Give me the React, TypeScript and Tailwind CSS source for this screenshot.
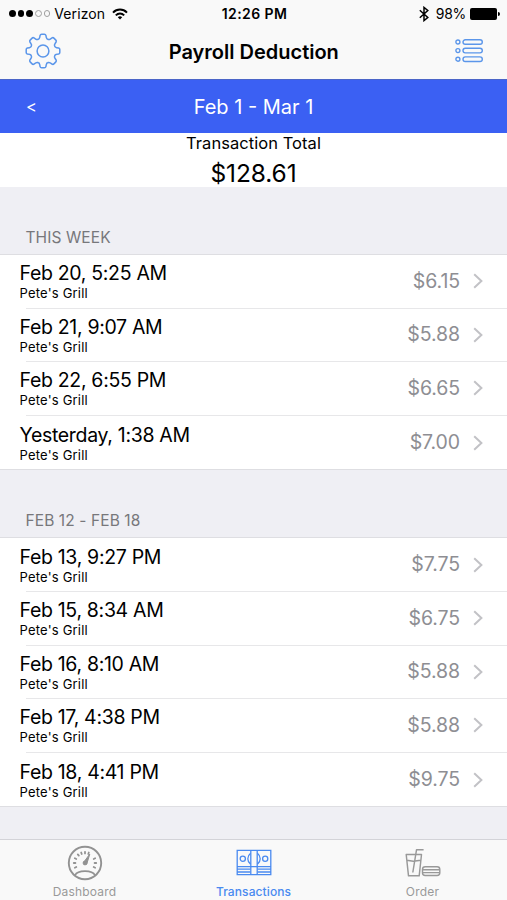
import React from 'react';
import clsx from 'clsx';

const sections = [
  {
    title: 'THIS WEEK',
    items: [
      { date: 'Feb 20, 5:25 AM', amount: '$6.15' },
      { date: 'Feb 21, 9:07 AM', amount: '$5.88' },
      { date: 'Feb 22, 6:55 PM', amount: '$6.65' },
      { date: 'Yesterday, 1:38 AM', amount: '$7.00' },
    ],
  },
  {
    title: 'FEB 12 - FEB 18',
    items: [
      { date: 'Feb 13, 9:27 PM', amount: '$7.75' },
      { date: 'Feb 15, 8:34 AM', amount: '$6.75' },
      { date: 'Feb 16, 8:10 AM', amount: '$5.88' },
      { date: 'Feb 17, 4:38 PM', amount: '$5.88' },
      { date: 'Feb 18, 4:41 PM', amount: '$9.75' },
    ],
  },
];

// Eight teeth, each the same curve turned by 45 degrees
const gearPath = () => {
  let d = '';
  for (let i = 0; i < 8; i++) {
    const a = (i * Math.PI) / 4;
    const p = (x: number, y: number) =>
      `${(x * Math.cos(a) - y * Math.sin(a)).toFixed(2)} ${(x * Math.sin(a) + y * Math.cos(a)).toFixed(2)}`;
    d += `${i === 0 ? 'M' : 'L'}${p(-5.1, -11.6)}Q${p(-3.6, -11.9)} ${p(-3.3, -13.6)}L${p(-2.9, -15.6)}Q${p(-2.6, -16.8)} ${p(-1.4, -16.8)}L${p(1.4, -16.8)}Q${p(2.6, -16.8)} ${p(2.9, -15.6)}L${p(3.3, -13.6)}Q${p(3.6, -11.9)} ${p(5.1, -11.6)}`;
  }
  return d + 'Z';
};

const GearIcon = () => (
  <svg width="36" height="36" viewBox="-18 -18 36 36" fill="none" stroke="#5b96ea" strokeWidth="1.5" strokeLinejoin="round">
    <path d={gearPath()} />
    <circle r="5.9" />
  </svg>
);

const ListIcon = () => (
  <svg width="28" height="24" viewBox="0 0 28 24" fill="none" stroke="#5b96ea" strokeWidth="1.4">
    {[3, 11.6, 20.2].map((y) => (
      <g key={y}>
        <circle cx="2.9" cy={y} r="2" />
        <rect x="8" y={y - 2.3} width="19.3" height="4.6" rx="2.3" />
      </g>
    ))}
  </svg>
);

const WifiIcon = () => (
  <svg width="16" height="12" viewBox="0 0 16 12" fill="none" stroke="#000" strokeWidth="2">
    <path d="M1 4.6C5 .6 11 .6 15 4.6" />
    <path d="M3.8 7.4C6.2 5 9.8 5 12.2 7.4" />
    <path d="M8 11.5 5.8 9.2Q8 7.4 10.2 9.2Z" fill="#000" stroke="none" />
  </svg>
);

const BluetoothIcon = () => (
  <svg width="10" height="16" viewBox="0 0 10 16" fill="none" stroke="#000" strokeWidth="1.5">
    <path d="M.8 4.3 8.8 11.5 5 14.6V1.4L8.8 4.5.8 11.7" />
  </svg>
);

const DashboardIcon = () => (
  <svg width="36" height="36" viewBox="-18 -18 36 36" fill="none" stroke="#929292">
    <circle r="16.2" strokeWidth="1.9" />
    {[-115, -90, -65, -40, -20, 0, 20, 65, 90, 115].map((a) => (
      <path key={a} d="M0-11.2V-9.6" strokeWidth="1.8" strokeLinecap="round" transform={`rotate(${a})`} />
    ))}
    <path d="M-1.4-.6 4.8-9 1.7 1.2Z" fill="#929292" />
    <circle r="1.9" fill="#929292" />
    <path d="M-10 12.3Q-8 8.2 0 8.2T10 12.3" strokeWidth="1.7" />
  </svg>
);

const MoneyIcon = () => (
  <svg width="36" height="28" viewBox="0 0 36 28" fill="none" stroke="#4a8af0" strokeWidth="1.3">
    <path d="M1.2 1.3H34.8V25.7H1.2ZM1.2 17.6H34.8M1.2 20.2H14.5M21.5 20.2H34.8M1.2 23H14.5M21.5 23H34.8" />
    <circle cx="6.8" cy="9.7" r="2.6" />
    <circle cx="29.2" cy="9.7" r="2.6" />
    <path d="M14.6 4.2Q11.8 6.4 11.8 9.7T14.6 15.2M21.4 4.2Q24.2 6.4 24.2 9.7T21.4 15.2" />
    <path d="M14.8 1.3V25.7M21.2 1.3V25.7" />
  </svg>
);

const OrderIcon = () => (
  <svg width="36" height="30" viewBox="0 0 36 30" fill="none" stroke="#999" strokeWidth="1.45" strokeLinejoin="round">
    <path d="M1.2 6.5H16.5L14.2 27.8H3.5ZM1.8 12.3 8.3 13.3 15.8 12.3M7.8 24.5 11.5 1.8H18.6" />
    <rect x="17.5" y="18.7" width="17.3" height="8.8" rx="2.7" />
    <path d="M17.5 21.8H34.8M17.5 24.6H34.8" />
  </svg>
);

const TransactionRow = ({ date, amount, last }: { date: string; amount: string; last: boolean }) => (
  <div className="flex h-[53.6px] flex-col bg-white">
    <div className="flex min-h-0 flex-1 items-center pr-[24px] pl-[19.5px]">
      <div className="flex-1">
        <div className="text-[19.5px] leading-[24px] tracking-[-0.32px]">{date}</div>
        <div className="text-[13px] leading-[16px] tracking-[0.2px]">Pete's Grill</div>
      </div>
      <span className="text-[19.5px] tracking-[-0.1px] text-[#8e8e93]">{amount}</span>
      <svg width="10" height="16" viewBox="0 0 10 16" className="ml-[13px]" fill="none" stroke="#c2c2c6" strokeWidth="2">
        <path d="M1.2 1.2 8.4 8 1.2 14.8" />
      </svg>
    </div>
    {!last && <div className="ml-[26px] h-px bg-[#e7e7e9]" />}
  </div>
);

const Tab = ({ label, active, children }: { label: string; active?: boolean; children: React.ReactNode }) => (
  <div className="flex flex-1 flex-col items-center pt-1">
    <div className="flex h-[38px] items-center">{children}</div>
    <span
      className={clsx(
        'mt-[2px] text-[12px] leading-[16px]',
        active ? 'font-medium tracking-[0.1px] text-[#4a8af0]' : 'tracking-[0.2px] text-[#999]'
      )}
    >
      {label}
    </span>
  </div>
);

const App = () => {
  return (
    <div className="flex h-[900px] w-[507px] flex-col overflow-hidden bg-[#efeff4] font-['Inter',sans-serif] text-black">
      <header className="h-[80px] border-b border-[#4b65c8] bg-[#f9f9f9]">
        <div className="grid h-[27px] grid-cols-3 items-center pr-[7px] pl-[9px] text-[13.5px]">
          <div className="flex items-center">
            <div className="flex gap-[2.2px]">
              {[0, 1, 2, 3, 4].map((i) => (
                <span key={i} className={clsx('size-[6.5px] rounded-full', i < 3 ? 'bg-black' : 'border border-[#a0a0a0]')} />
              ))}
            </div>
            <span className="ml-[4px] text-[14px] tracking-[0.1px]">Verizon</span>
            <span className="ml-[7px]"><WifiIcon /></span>
          </div>
          <span className="text-center text-[14px] font-semibold tracking-[0.4px]">12:26 PM</span>
          <div className="flex items-center justify-end">
            <BluetoothIcon />
            <span className="ml-[7px] text-[14px] tracking-[-0.3px]">98%</span>
            <span className="ml-[4px] h-[12px] w-[27px] rounded-[2px] bg-black" />
            <span className="ml-px h-[4px] w-[2px] rounded-r-full bg-black" />
          </div>
        </div>
        <div className="grid h-[48px] grid-cols-[50px_1fr_50px] items-center pr-[24px] pl-[24.5px]">
          <GearIcon />
          <h1 className="pt-[2px] text-center text-[20px] font-semibold">Payroll Deduction</h1>
          <span className="justify-self-end"><ListIcon /></span>
        </div>
      </header>

      <div className="grid h-[53px] grid-cols-3 items-center bg-[#3b60f3] text-white">
        <span className="pl-[26px] text-[16.5px]">&lt;</span>
        <span className="pt-px text-center text-[20px]">Feb 1 - Mar 1</span>
      </div>

      <div className="flex h-[54px] flex-col items-center bg-white">
        <div className="text-[16.5px] leading-[20px] tracking-[0.05px]">Transaction Total</div>
        <div className="mt-[5px] text-[24.5px] leading-[30px] tracking-[-0.1px]">$128.61</div>
      </div>

      {sections.map((section) => (
        <section key={section.title}>
          <div className="flex h-[68px] items-end border-b border-[#dedee2] pb-[5.5px] pl-[25.5px] text-[15.5px] leading-[22px] tracking-[0.1px] text-[#77777b]">
            {section.title}
          </div>
          <div className="border-b border-[#dedee2]">
            {section.items.map((item, i) => (
              <TransactionRow key={item.date} {...item} last={i === section.items.length - 1} />
            ))}
          </div>
        </section>
      ))}

      <nav className="mt-auto flex h-[61px] border-t border-[#d3d3d8] bg-[#f9f9f9]">
        <Tab label="Dashboard"><DashboardIcon /></Tab>
        <Tab label="Transactions" active><MoneyIcon /></Tab>
        <Tab label="Order"><OrderIcon /></Tab>
      </nav>
    </div>
  );
};

export default App;
